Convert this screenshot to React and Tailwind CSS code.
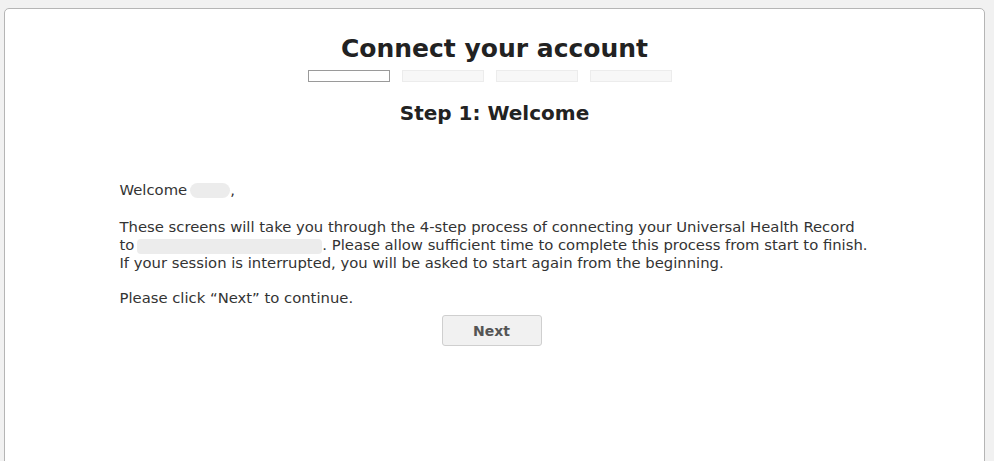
export default function App() {
  return (
    <div
      className="w-[994px] h-[461px] bg-[#f1f1f1] pt-2 pl-1 pr-[9px] overflow-hidden"
      style={{ fontFamily: '"DejaVu Sans", sans-serif' }}
    >
      <div className="h-[460px] bg-white border border-[#b5b5b5] rounded-[5px]">
        <div className="pt-[23px] text-center">
          <h1 className="text-[25px] leading-[34px] font-bold text-[#222]">Connect your account</h1>
          <div className="flex justify-center gap-3 mt-[4px] pr-[9px]">
            <div className="w-[82px] h-[12px] border border-[#9a9a9a] bg-white" />
            <div className="w-[82px] h-[12px] border border-[#ececec] bg-[#f7f7f7]" />
            <div className="w-[82px] h-[12px] border border-[#ececec] bg-[#f7f7f7]" />
            <div className="w-[82px] h-[12px] border border-[#ececec] bg-[#f7f7f7]" />
          </div>
          <h2 className="mt-[18px] text-[20px] leading-[26px] font-bold text-[#222]">Step 1: Welcome</h2>
        </div>

        <div className="max-w-[750px] mx-auto mt-[55px] text-[14.8px] leading-[18px] text-[#333] whitespace-nowrap">
          <p className="flex items-center">
            Welcome
            <span className="inline-block w-[40px] h-[15px] ml-[3px] rounded-full bg-[#ececec]" />
            ,
          </p>
          <p className="mt-[19px]">
            These screens will take you through the 4-step process of connecting your Universal Health Record
            <br />
            to
            <span className="inline-block align-middle w-[185px] h-[15px] ml-[3px] rounded bg-[#ececec]" />. Please allow
            sufficient time to complete this process from start to finish.
            <br />
            If your session is interrupted, you will be asked to start again from the beginning.
          </p>
          <p className="mt-[17px]">Please click “Next” to continue.</p>
          <div className="flex justify-center mt-[8px] pr-[6px]">
            <button className="w-[100px] h-[31px] rounded-[3px] border border-[#cfcfcf] bg-[#f1f1f1] text-[14px] font-bold text-[#555]">
              Next
            </button>
          </div>
        </div>
      </div>
    </div>
  );
}
